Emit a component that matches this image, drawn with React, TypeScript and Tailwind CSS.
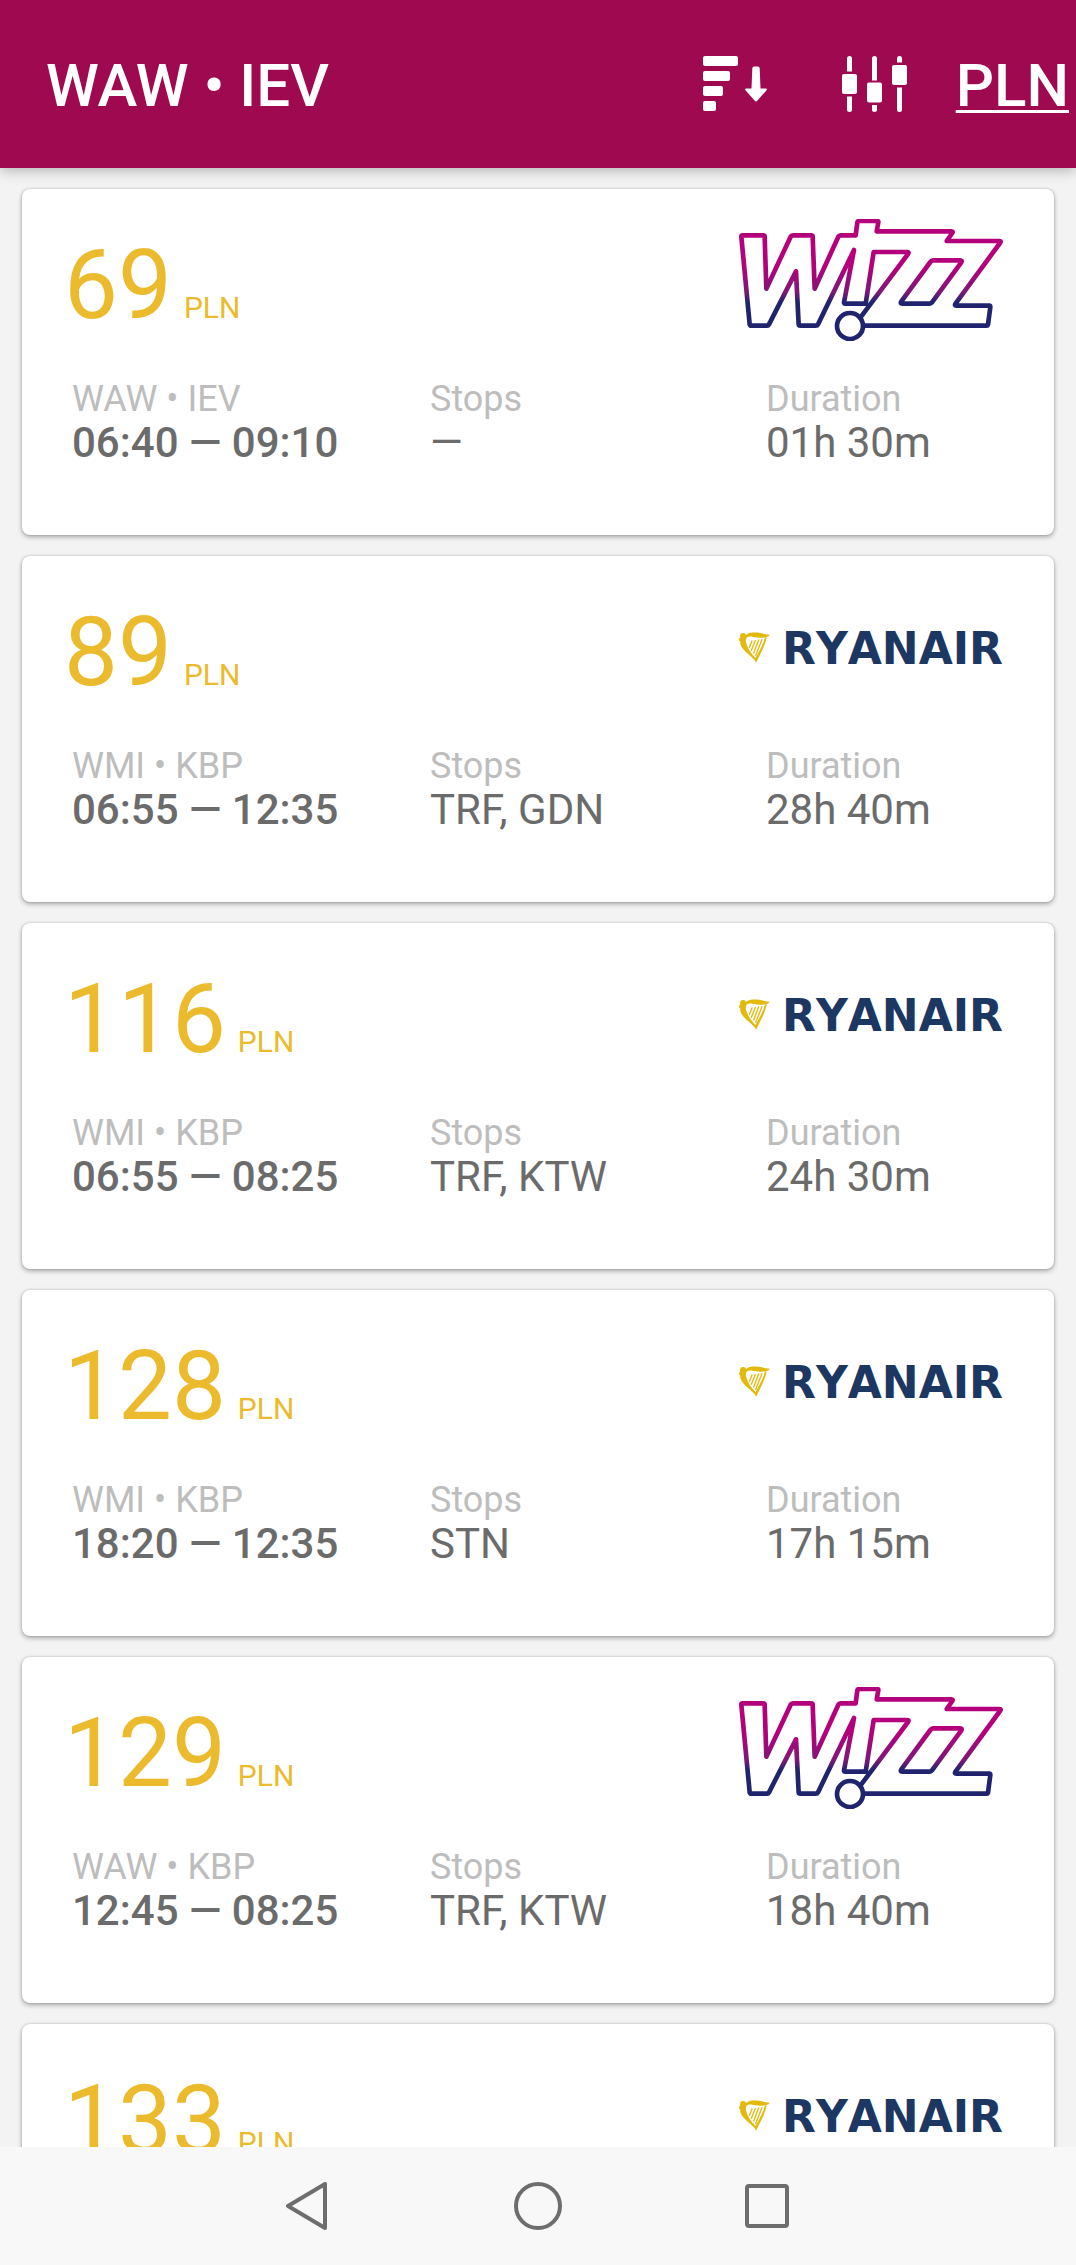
import React from 'react';

type Airline = 'wizz' | 'ryanair';

interface Flight {
  id: number;
  price: number;
  airline: Airline;
  route: string;
  time: string;
  stops: string;
  duration: string;
}

const flights: Flight[] = [
  { id: 1, price: 69, airline: 'wizz', route: 'WAW • IEV', time: '06:40 — 09:10', stops: '—', duration: '01h 30m' },
  { id: 2, price: 89, airline: 'ryanair', route: 'WMI • KBP', time: '06:55 — 12:35', stops: 'TRF, GDN', duration: '28h 40m' },
  { id: 3, price: 116, airline: 'ryanair', route: 'WMI • KBP', time: '06:55 — 08:25', stops: 'TRF, KTW', duration: '24h 30m' },
  { id: 4, price: 128, airline: 'ryanair', route: 'WMI • KBP', time: '18:20 — 12:35', stops: 'STN', duration: '17h 15m' },
  { id: 5, price: 129, airline: 'wizz', route: 'WAW • KBP', time: '12:45 — 08:25', stops: 'TRF, KTW', duration: '18h 40m' },
  { id: 6, price: 133, airline: 'ryanair', route: 'WMI • KBP', time: '06:55 — 12:35', stops: 'TRF, GDN', duration: '28h 40m' },
];

const WizzLogo: React.FC<{ id: number }> = ({ id }) => (
  <svg viewBox="57 57 792 366" className="h-[122px] w-[264px]" role="img" aria-label="Wizz">
    <defs>
      <linearGradient id={`wizz-${id}`} gradientUnits="userSpaceOnUse" x1="0" y1="57" x2="0" y2="423">
        <stop offset="0.38" stopColor="#b5007c" />
        <stop offset="0.6" stopColor="#7d1876" />
        <stop offset="0.68" stopColor="#20246f" />
      </linearGradient>
    </defs>
    <g fill="none" stroke={`url(#wizz-${id})`} strokeWidth="14" strokeLinejoin="round" strokeLinecap="round">
      <path d="M430 377H800Q803 377 804 374L811 321Q811 317 808 317H709Q702 317 707 310L840 129Q845 123 838 123H680L697 99Q700 94 694 94H470L475 67Q476 63 472 63H417Q413 63 412 67L407 106H362Q357 106 355 110L284 266L278 110Q278 106 273 106H219Q214 106 212 110L139 266L134 110Q134 106 129 106H68Q64 106 64 110L89 373Q90 377 94 377H141Q145 377 147 373L228 214L236 373Q236 377 241 377H287Q292 377 294 373L402 150L372 307Q372 311 376 311H437L461 156H562Q568 156 564 162L421 353" />
      <path d="M639 181H720Q728 181 724 187L636 307Q632 311 628 311H547Q539 311 544 304L631 186Q635 181 639 181Z" />
      <circle cx="390" cy="378" r="39" />
    </g>
  </svg>
);

const RyanairLogo = () => (
  <div className="flex w-[264px] items-center justify-between">
    <svg viewBox="57 66 94 92" className="h-[31px] w-[31px] shrink-0" fill="#e3b90c" aria-hidden="true">
      <path d="M61 82C58 72 64 67 70 68C75 68 77 71 78 74C96 61 122 69 150 73L147 78C132 84 110 83 95 79C82 77 76 83 78 96C82 114 94 130 107 144C118 124 130 103 136 82H141C136 108 120 134 109 158C101 140 66 124 61 101C60 96 63 94 59 92C56 88 57 84 61 82Z" />
      <path d="M97 91L88 113M107 89L94 122M117 88L101 130M127 87L107 138" fill="none" stroke="#e3b90c" strokeWidth="4" />
    </svg>
    <span className="pt-1 font-['DejaVu_Sans',sans-serif] text-[44px] leading-none font-bold text-[#1c3762] [font-kerning:none]">
      RYANAIR
    </span>
  </div>
);

const FlightCard: React.FC<{ flight: Flight }> = ({ flight }) => (
  <article className="shrink-0 rounded-lg bg-white pt-[30px] pr-[51px] pb-[70px] pl-[42px] shadow-[0_2px_5px_rgba(0,0,0,0.32),0_0_2px_rgba(0,0,0,0.2)]">
    <div className="flex h-[122px] items-center justify-between">
      <p className="flex items-baseline gap-3 pt-2.5 text-[#ebba2d]">
        <span className="text-[96px] leading-none">{flight.price}</span>
        <span className="text-[30px] leading-none">PLN</span>
      </p>
      {flight.airline === 'wizz' ? <WizzLogo id={flight.id} /> : <RyanairLogo />}
    </div>
    <dl className="mt-9 grid grid-cols-[358fr_336fr_237fr] pl-2 whitespace-nowrap text-[#6b6b6b]">
      <div>
        <dt className="text-[36px] leading-[44px] text-[#bdbdbd]">{flight.route}</dt>
        <dd className="text-[42px] leading-[44px] font-medium">{flight.time}</dd>
      </div>
      <div>
        <dt className="text-[36px] leading-[44px] text-[#bdbdbd]">Stops</dt>
        <dd className="text-[42px] leading-[44px]">{flight.stops}</dd>
      </div>
      <div>
        <dt className="text-[36px] leading-[44px] text-[#bdbdbd]">Duration</dt>
        <dd className="text-[42px] leading-[44px]">{flight.duration}</dd>
      </div>
    </dl>
  </article>
);

const Header = () => (
  <header className="z-10 flex h-[168px] shrink-0 items-center bg-[#9f094f] pr-[7px] pl-[46px] text-white shadow-[0_3px_12px_rgba(0,0,0,0.25)]">
    <h1 className="flex-1 pt-1 text-[60px] leading-none font-medium">WAW • IEV</h1>
    <button type="button" aria-label="Sort" className="mr-[75px]">
      <svg viewBox="0 0 64 56" className="h-14 w-16" fill="currentColor">
        <rect y="0" width="35" height="10" rx="2" />
        <rect y="15" width="27" height="10" rx="2" />
        <rect y="30" width="20" height="10" rx="2" />
        <rect y="45" width="13" height="10" rx="2" />
        <path d="M51 10.5H55Q56.500 10.500 56.700 12.500L57.500 32.500H62.500Q65 32.500 63.300 34.500L54.500 44.500Q53 46.500 51.500 44.500L42.700 34.500Q41 32.500 43.500 32.500H48.500L49.300 12.500Q49.500 10.500 51 10.500Z" />
      </svg>
    </button>
    <button type="button" aria-label="Filters" className="mr-12">
      <svg viewBox="0 0 66 56" className="h-14 w-[66px]" fill="currentColor">
        <path d="M5 2.500a2.500 2.500 0 0 1 5 0V15.500H5ZM5 40.500H10V53.500a2.500 2.500 0 0 1 -5 0Z" />
        <rect x="0" y="18" width="15" height="20" rx="2" />
        <path d="M30 2.500a2.500 2.500 0 0 1 5 0V24.500H30ZM30 49H35V53.500a2.500 2.500 0 0 1 -5 0Z" />
        <rect x="25" y="26.500" width="15" height="20" rx="2" />
        <path d="M55 2.500a2.500 2.500 0 0 1 5 0V6.500H55ZM55 31.500H60V53.500a2.500 2.500 0 0 1 -5 0Z" />
        <rect x="50" y="9" width="15" height="20" rx="2" />
      </svg>
    </button>
    <button
      type="button"
      className="pt-1 text-[60px] leading-none font-medium underline decoration-3 underline-offset-4"
    >
      PLN
    </button>
  </header>
);

const NavBar = () => (
  <nav className="z-10 flex h-[118px] shrink-0 justify-center bg-[#f8f8f8] text-[#6d6d6d]">
    <button type="button" aria-label="Back" className="flex w-[230px] items-center justify-center">
      <svg viewBox="0 0 48 48" className="size-12" fill="none" stroke="currentColor" strokeWidth="4" strokeLinejoin="round">
        <path d="M41 2V46L4 24Z" />
      </svg>
    </button>
    <button type="button" aria-label="Home" className="flex w-[230px] items-center justify-center">
      <svg viewBox="0 0 48 48" className="size-12" fill="none" stroke="currentColor" strokeWidth="4">
        <circle cx="24" cy="24" r="22" />
      </svg>
    </button>
    <button type="button" aria-label="Recent apps" className="flex w-[230px] items-center justify-center">
      <svg viewBox="0 0 48 48" className="size-12" fill="none" stroke="currentColor" strokeWidth="4">
        <rect x="3" y="4" width="40" height="40" rx="2" />
      </svg>
    </button>
  </nav>
);

export default function App() {
  return (
    <div className="flex h-screen flex-col overflow-hidden bg-[#f3f3f3] font-[Roboto,sans-serif]">
      <Header />
      <main className="flex flex-1 flex-col gap-[21px] overflow-y-auto px-[22px] py-[21px] [scrollbar-width:none]">
        {flights.map((flight) => (
          <FlightCard key={flight.id} flight={flight} />
        ))}
      </main>
      <NavBar />
    </div>
  );
}
